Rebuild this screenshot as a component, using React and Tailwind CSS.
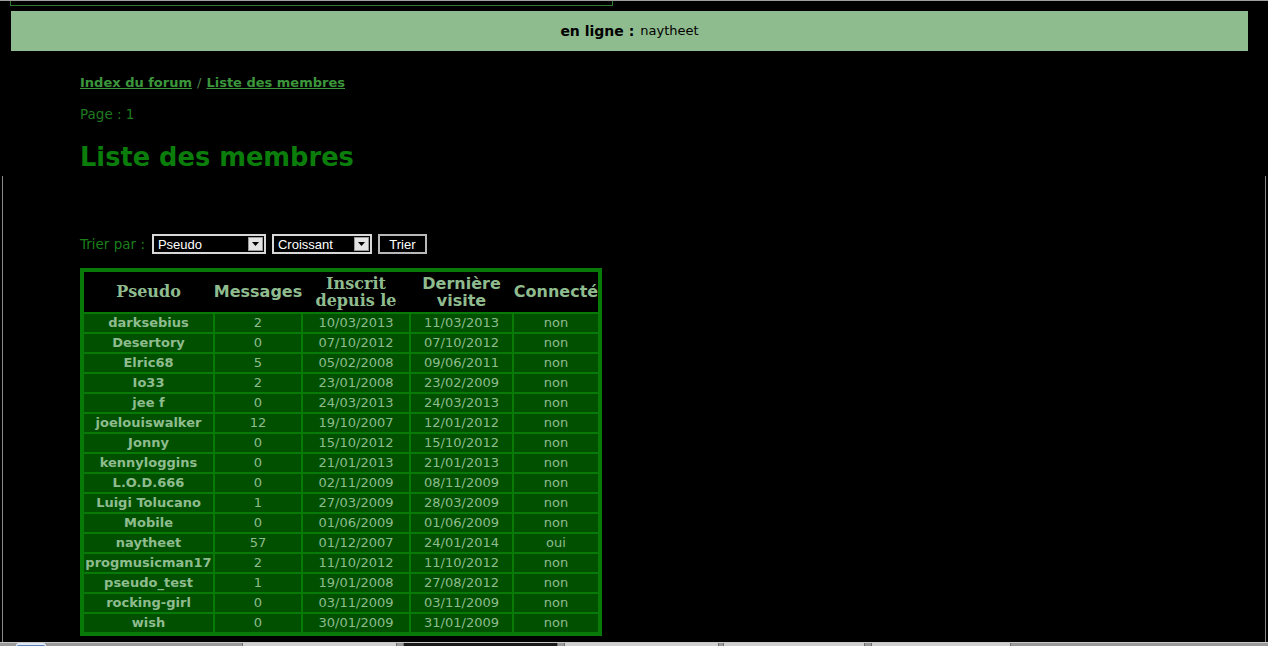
import React from "react";

const members = [
  ["darksebius", "2", "10/03/2013", "11/03/2013", "non"],
  ["Desertory", "0", "07/10/2012", "07/10/2012", "non"],
  ["Elric68", "5", "05/02/2008", "09/06/2011", "non"],
  ["Io33", "2", "23/01/2008", "23/02/2009", "non"],
  ["jee f", "0", "24/03/2013", "24/03/2013", "non"],
  ["joelouiswalker", "12", "19/10/2007", "12/01/2012", "non"],
  ["Jonny", "0", "15/10/2012", "15/10/2012", "non"],
  ["kennyloggins", "0", "21/01/2013", "21/01/2013", "non"],
  ["L.O.D.666", "0", "02/11/2009", "08/11/2009", "non"],
  ["Luigi Tolucano", "1", "27/03/2009", "28/03/2009", "non"],
  ["Mobile", "0", "01/06/2009", "01/06/2009", "non"],
  ["naytheet", "57", "01/12/2007", "24/01/2014", "oui"],
  ["progmusicman17", "2", "11/10/2012", "11/10/2012", "non"],
  ["pseudo_test", "1", "19/01/2008", "27/08/2012", "non"],
  ["rocking-girl", "0", "03/11/2009", "03/11/2009", "non"],
  ["wish", "0", "30/01/2009", "31/01/2009", "non"],
];

const cols = "grid grid-cols-[129px_86px_106px_101px_84px] gap-x-[2px]";

function FakeSelect({ label, width }) {
  return (
    <div
      className={`${width} h-[20px] border-2 border-[#d8d8d8] bg-black flex items-center justify-between pl-[4px] pr-[1px]`}
    >
      <span className="text-white text-[13px] leading-none font-['Liberation_Sans',Arial,sans-serif]">
        {label}
      </span>
      <span className="w-[15px] h-[14px] bg-[#e4e4e4] border border-[#9a9a9a] flex items-center justify-center">
        <svg width="7" height="4" viewBox="0 0 7 4">
          <path d="M0 0h7L3.5 4z" fill="#000" />
        </svg>
      </span>
    </div>
  );
}

export default function App() {
  return (
    <div className="h-[646px] w-[1268px] overflow-hidden bg-black flex flex-col font-['DejaVu_Sans',Verdana,sans-serif]">
      {/* top edge */}
      <div className="h-px bg-[#a0a0a0]"></div>
      <div className="ml-[10px] w-[603px] h-[5px] border-x border-b border-[#2f7a2f]"></div>

      {/* en ligne band */}
      <div className="mt-[5px] ml-[11px] w-[1237px] h-[40px] bg-[#8fbc8f] flex items-center justify-center text-black">
        <span className="text-[14px] font-bold">en ligne :</span>
        <span className="ml-[6px] text-[13px]">naytheet</span>
      </div>

      <div className="pl-[80px]">
        <div className="mt-[24px] h-[16px] leading-[16px] text-[13px] font-bold text-[#3c963c]">
          <a href="#" className="underline">Index du forum</a>
          <span className="font-normal text-[#4e7e4e] mx-[5px]">/</span>
          <a href="#" className="underline">Liste des membres</a>
        </div>
        <div className="mt-[15px] h-[16px] leading-[16px] text-[13.5px] text-[#1f7a1f]">
          Page : 1
        </div>
        <h1 className="mt-[20px] h-[30px] leading-[30px] text-[25.7px] font-bold text-[#0b7d0b]">
          Liste des membres
        </h1>
      </div>

      {/* framed area */}
      <div className="mt-[4px] flex-1 mx-[2px] border-x border-[#8a8a8a] pl-[77px] pt-[58px]">
        <div className="flex items-center h-[20px]">
          <span className="text-[13.5px] text-[#1a7f1a] mr-[7px]">Trier par :</span>
          <FakeSelect label="Pseudo" width="w-[114px]" />
          <div className="w-[6px]"></div>
          <FakeSelect label="Croissant" width="w-[100px]" />
          <button className="ml-[6px] w-[49px] h-[20px] border-2 border-[#b8b8b8] bg-black text-white text-[13px] leading-none font-['Liberation_Sans',Arial,sans-serif]">
            Trier
          </button>
        </div>

        <div className="mt-[14px] w-[522px] border-4 border-[#077a07] bg-[#077a07] flex flex-col gap-y-[2px]">
          <div className={`${cols} bg-black h-[40px] items-center text-[#8fbc8f] font-bold text-center`}>
            <div className="text-[16px] font-['DejaVu_Serif',Georgia,serif]">Pseudo</div>
            <div className="text-[16px] font-['DejaVu_Sans',Verdana,sans-serif] -mx-[3px]">Messages</div>
            <div className="text-[16px] leading-[17px] font-['DejaVu_Serif',Georgia,serif]">
              Inscrit
              <br />
              depuis le
            </div>
            <div className="text-[16px] leading-[17px]">
              Dernière
              <br />
              visite
            </div>
            <div className="text-[16px] -mx-[3px]">Connecté</div>
          </div>
          {members.map((m) => (
            <div key={m[0]} className={`${cols} h-[18px] text-[13px] leading-[18px] text-[#8fbc8f] text-center`}>
              <div className="bg-[#005000] font-bold whitespace-nowrap overflow-visible">{m[0]}</div>
              <div className="bg-[#005000]">{m[1]}</div>
              <div className="bg-[#005000]">{m[2]}</div>
              <div className="bg-[#005000]">{m[3]}</div>
              <div className="bg-[#005000]">{m[4]}</div>
            </div>
          ))}
        </div>
      </div>

      {/* taskbar edge */}
      <div className="h-[4px] bg-[#9a9a9a] border-t border-[#c8c8c8] flex items-end">
        <div className="ml-[16px] w-[30px] h-[3px] rounded-t-full border-t-2 border-x border-[#dfe8f5] bg-[#5d7fb8]"></div>
        <div className="ml-[196px] w-[155px] h-[3px] bg-[#d0d0d0] border-x border-[#707070]"></div>
        <div className="ml-[6px] w-[155px] h-[3px] bg-[#1a1a1a] border-x border-[#707070]"></div>
        <div className="ml-[6px] w-[155px] h-[3px] bg-[#d0d0d0] border-x border-[#707070]"></div>
        <div className="ml-[4px] w-[142px] h-[3px] bg-[#d0d0d0] border-x border-[#707070]"></div>
        <div className="ml-[6px] w-[140px] h-[3px] bg-[#d0d0d0] border-x border-[#707070]"></div>
      </div>
    </div>
  );
}
